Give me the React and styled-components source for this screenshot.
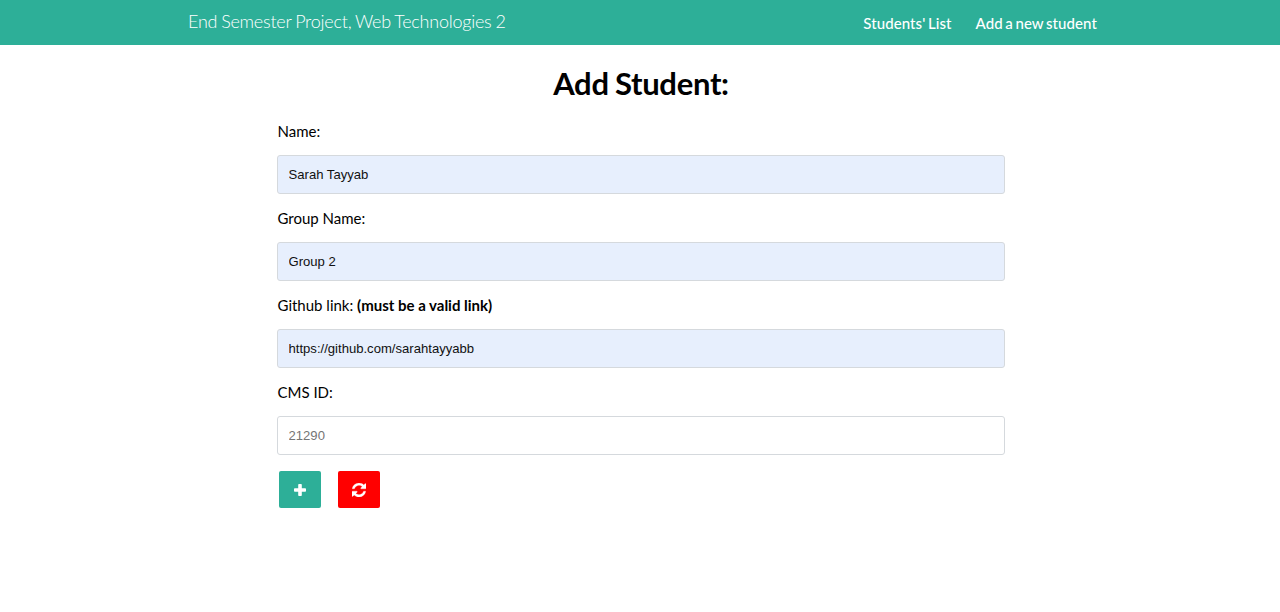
import React from "react";
import styled, { createGlobalStyle } from "styled-components";

const GlobalStyle = createGlobalStyle`
  * { box-sizing: border-box; }
  body { margin: 0; background: #fff; font-family: Lato, sans-serif; color: #000; }
`;
const Header = styled.header`
  height: 45px;
  padding: 0 183px 2px 188px;
  background: #2daf98;
  color: #fff;
  display: flex;
  align-items: center;
  justify-content: space-between;
`;
const Brand = styled.div`
  font-size: 18px;
  font-weight: 300;
  line-height: 22px;
  padding-bottom: 1px;
  letter-spacing: -0.24px;
  word-spacing: -0.7px;
  white-space: nowrap;
`;
const Nav = styled.nav`
  display: flex;
  gap: 24px;
  padding-top: 2px;
`;
const NavLink = styled.a`
  font-size: 15px;
  line-height: 20px;
  font-weight: 500;
  letter-spacing: 0.08px;
  word-spacing: -1.3px;
  white-space: nowrap;
`;
const Main = styled.main`
  width: 728px;
  margin-left: 277px;
  padding-top: 19px;
`;
const Title = styled.h1`
  margin: 0 0 17px;
  font-size: 31px;
  line-height: 38px;
  font-weight: 700;
  letter-spacing: -0.3px;
  word-spacing: -1px;
  text-align: center;
`;
const Field = styled.label`
  display: block;
  height: 87px;
`;
const Caption = styled.span`
  display: block;
  font-size: 15px;
  line-height: 24px;
  height: 36px;
  padding-left: 0.5px;
`;
const Input = styled.input`
  display: block;
  width: 100%;
  height: 39px;
  padding: 0 11px 0 10.5px;
  border: 1px solid #d5d9dd;
  border-radius: 3px;
  font: 13.1px "Liberation Sans", Arial, sans-serif;
  color: #111;
  background: ${(p) => (p.$filled ? "#e7effd" : "#fff")};
  &::placeholder { color: #757575; opacity: 1; }
`;
const Actions = styled.div`
  display: flex;
  gap: 17px;
  padding-left: 2px;
  margin-top: 4px;
`;
const Button = styled.button`
  width: 42px;
  height: 37px;
  padding: 0;
  border: 0;
  border-radius: 2px;
  background: ${(p) => p.$color};
  color: #fff;
  display: flex;
  align-items: center;
  justify-content: center;
`;

const FIELDS = [
  { caption: "Name:", value: "Sarah Tayyab" },
  { caption: "Group Name:", value: "Group 2" },
  { caption: "Github link: ", note: "(must be a valid link)", value: "https://github.com/sarahtayyabb" },
  { caption: "CMS ID:", placeholder: "21290" },
];

const PlusIcon = () => (
  <svg width="12" height="12" viewBox="0 0 12 12" fill="currentColor">
    <path d="M5 0h2a.8.8 0 0 1 .8.8v3.400h3.400a.8.8 0 0 1 .8.8v2a.8.8 0 0 1-.8.8H7.800v3.400a.8.8 0 0 1-.8.8H5a.8.8 0 0 1-.8-.8V7.800H.8A.8.8 0 0 1 0 7V5a.8.8 0 0 1 .8-.8h3.400V.8A.8.8 0 0 1 5 0z" />
  </svg>
);

const RefreshIcon = () => (
  <svg width="14" height="14" viewBox="0 0 1536 1536" fill="currentColor" stroke="currentColor" strokeWidth="30">
    <path d="M1511 928q0 5-1 7-64 268-268 434.500T764 1536q-146 0-282.500-55T238 1324l-129 129q-19 19-45 19t-45-19-19-45V960q0-26 19-45t45-19h448q26 0 45 19t19 45-19 45l-137 137q71 66 161 102t187 36q134 0 250-65t186-179q11-17 53-117 8-23 30-23h192q13 0 22.500 9.500t9.500 22.500zm25-800v448q0 26-19 45t-45 19h-448q-26 0-45-19t-19-45 19-45l138-138Q969 256 768 256q-134 0-250 65T332 500q-11 17-53 117-8 23-30 23H50q-13 0-22.500-9.500T18 608v-7q65-268 270-434.500T768 0q146 0 284 55.500T1297 212l130-129q19-19 45-19t45 19 19 45z" />
  </svg>
);

export default function App() {
  return (
    <>
      <GlobalStyle />
      <Header>
        <Brand>End Semester Project, Web Technologies 2</Brand>
        <Nav>
          <NavLink>Students' List</NavLink>
          <NavLink>Add a new student</NavLink>
        </Nav>
      </Header>
      <Main>
        <Title>Add Student:</Title>
        {FIELDS.map((f) => (
          <Field key={f.caption}>
            <Caption>{f.caption}{f.note && <b>{f.note}</b>}</Caption>
            <Input $filled={!!f.value} defaultValue={f.value} placeholder={f.placeholder} />
          </Field>
        ))}
        <Actions>
          <Button $color="#2daf98" aria-label="Add"><PlusIcon /></Button>
          <Button $color="#ff0000" aria-label="Reset"><RefreshIcon /></Button>
        </Actions>
      </Main>
    </>
  );
}
